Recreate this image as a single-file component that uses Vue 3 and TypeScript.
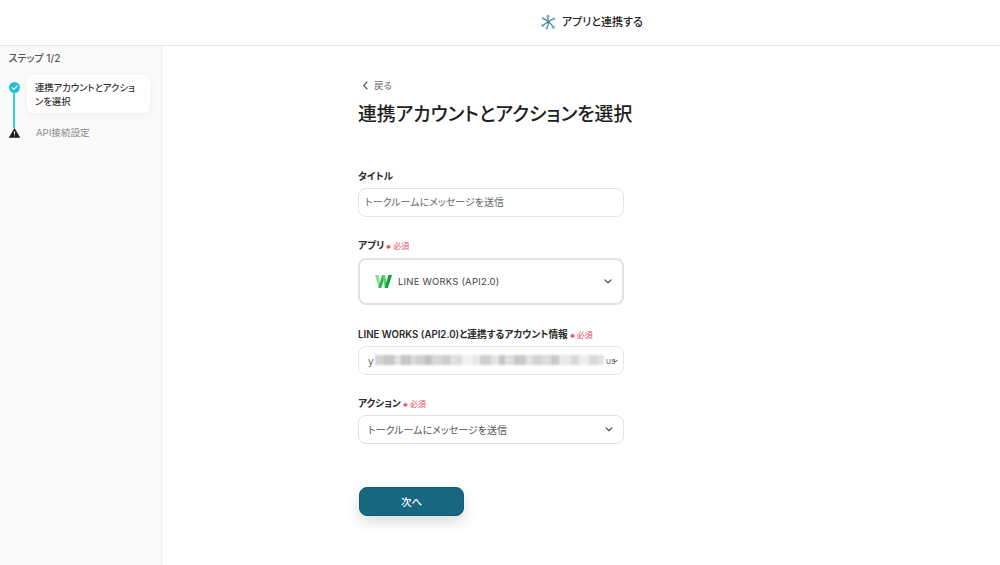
<script setup lang="ts">
const blur: [number, string][] = [
  [8,'#d4d4d4'],[12,'#c8c8c8'],[6,'#e2e2e2'],[10,'#c6c6c6'],[5,'#dcdcdc'],[9,'#cfcfcf'],[7,'#c2c2c2'],[10,'#d8d8d8'],[8,'#cccccc'],[12,'#dedede'],[10,'#f0f0f0'],[8,'#e8e8e8'],[11,'#cfcfcf'],[8,'#e4e4e4'],[6,'#c6c6c6'],[9,'#dedede'],[12,'#c9c9c9'],[7,'#e2e2e2'],[8,'#d0d0d0'],[10,'#dcdcdc'],[8,'#c9c9c9'],[12,'#e8e8e8'],[8,'#d8d8d8'],[10,'#ededed'],[8,'#d8d8d8'],[7,'#e2e2e2']
]
</script>

<template>
  <div class="page">
    <header class="top">
      <div class="top-title">
        <svg class="logo" width="15" height="16" viewBox="0 0 15 16" fill="none" stroke-linecap="round">
          <g stroke="#3f7f97" stroke-width="1.2">
            <path d="M7.5 8 Q6.4 5 7 2.6" />
            <path d="M7.5 8 Q10 5.6 12.6 5" />
            <path d="M7.5 8 Q10.6 10 12 13" />
            <path d="M7.5 8 Q7.4 11.4 6 14" />
            <path d="M7.5 8 Q4.4 9.4 2 11.4" />
            <path d="M7.5 8 Q5 5.6 2.4 4.6" />
          </g>
          <g fill="#6fb6cc">
            <circle cx="7" cy="2.2" r="1.5" />
            <circle cx="12.8" cy="4.8" r="1.4" />
            <circle cx="12.4" cy="13.2" r="1.5" />
            <circle cx="5.8" cy="14.3" r="1.3" />
            <circle cx="1.8" cy="11.6" r="1.5" />
            <circle cx="2.2" cy="4.4" r="1.3" />
          </g>
        </svg>
        <span>アプリと連携する</span>
      </div>
    </header>

    <div class="body">
      <aside class="side">
        <div class="step-head">ステップ 1/2</div>
        <div class="steps">
          <div class="rail">
            <svg class="check" width="11" height="11" viewBox="0 0 11 11">
              <circle cx="5.5" cy="5.5" r="5.5" fill="#22bfd6" />
              <path d="M3 5.7 L4.8 7.3 L8 4" fill="none" stroke="#fff" stroke-width="1.1" stroke-linecap="round" stroke-linejoin="round" />
            </svg>
            <div class="line"></div>
            <svg class="warn" width="11" height="10" viewBox="0 0 11 10">
              <path d="M5.5 0.4 L10.8 9.6 L0.2 9.6 Z" fill="#1c1c1c" stroke="#1c1c1c" stroke-width="0.6" stroke-linejoin="round" />
              <path d="M5.5 3.4 V6.4 M5.5 7.6 V8.3" stroke="#fff" stroke-width="1" />
            </svg>
          </div>
          <div class="step-items">
            <div class="step-card">連携アカウントとアクションを選択</div>
            <div class="step-next">API接続設定</div>
          </div>
        </div>
      </aside>

      <main class="main">
        <div class="form">
          <div class="back">
            <svg width="7" height="9" viewBox="0 0 7 9" fill="none">
              <path d="M5 1 L1.7 4.5 L5 8" stroke="#555" stroke-width="1.1" stroke-linecap="round" stroke-linejoin="round" />
            </svg>
            <span>戻る</span>
          </div>
          <h1 class="heading">連携アカウントとアクションを選択</h1>

          <div class="field first">
            <label class="label">タイトル</label>
            <div class="box text-box">トークルームにメッセージを送信</div>
          </div>

          <div class="field app">
            <label class="label wide">アプリ<span class="req"><i>✱</i>必須</span></label>
            <div class="box app-box">
              <svg class="w-logo" width="17" height="13" viewBox="0 0 17 13">
                <path d="M0 0 H3.6 L6.3 13 H3.6 Z" fill="#8fdc9b" />
                <path d="M3.6 13 L7 0 H10 L6.3 13 Z" fill="#1fb84c" />
                <path d="M7 0 H10 L12.8 13 H9.8 Z" fill="#63d06f" />
                <path d="M9.8 13 L13.4 0 H17 L12.8 13 Z" fill="#0d9f3f" />
              </svg>
              <span>LINE WORKS (API2.0)</span>
              <svg class="chev" width="8" height="5" viewBox="0 0 10 6" fill="none">
                <path d="M1.2 1 L5 4.6 L8.8 1" stroke="#444" stroke-width="1.4" stroke-linecap="round" stroke-linejoin="round" />
              </svg>
            </div>
          </div>

          <div class="field acct">
            <label class="label">LINE WORKS (API2.0)と連携するアカウント情報<span class="req"><i>✱</i>必須</span></label>
            <div class="box acct-box">
              <span class="y">y</span>
              <div class="blur">
                <span v-for="(b, i) in blur" :key="i" class="seg" :style="{ width: b[0] + 'px', background: b[1] }"></span>
              </div>
              <span class="us">us</span>
              <svg class="small-chev" width="5" height="4" viewBox="0 0 5 4"><path d="M0.5 0.8 L2.5 3 L4.5 0.8" fill="none" stroke="#444" stroke-width="1" /></svg>
            </div>
          </div>

          <div class="field act">
            <label class="label">アクション<span class="req"><i>✱</i>必須</span></label>
            <div class="box action-box">
              <span>トークルームにメッセージを送信</span>
              <svg class="chev" width="8" height="5" viewBox="0 0 10 6" fill="none">
                <path d="M1.2 1 L5 4.6 L8.8 1" stroke="#444" stroke-width="1.4" stroke-linecap="round" stroke-linejoin="round" />
              </svg>
            </div>
          </div>

          <button class="next" type="button">次へ</button>
        </div>
      </main>
    </div>
  </div>
</template>

<style>
html, body { margin: 0; background: #fff; }
</style>

<style scoped>
.page {
  width: 1000px;
  height: 565px;
  overflow: hidden;
  display: flex;
  flex-direction: column;
  font-family: "Inter", "Noto Sans CJK JP", sans-serif;
  font-feature-settings: "palt";
  color: #2a2a2a;
}
.top {
  height: 46px;
  box-sizing: border-box;
  border-bottom: 1px solid #e6e6e6;
  display: flex;
  padding-left: 541px;
  padding-top: 13px;
}
.top-title {
  display: flex;
  align-items: center;
  height: 16px;
  gap: 6px;
  font-size: 11px;
  font-weight: 500;
  color: #222;
}
.logo { margin-top: 2px; }
.top-title span { margin-top: -1px; }
.body { flex: 1; display: flex; min-height: 0; }
.side {
  width: 162px;
  box-sizing: border-box;
  background: #fafafa;
  border-right: 1px solid #efefef;
  padding: 6px 0 0 8.5px;
}
.step-head { font-size: 10px; line-height: 13px; font-weight: 500; color: #555; }
.steps { display: flex; margin-top: 10px; }
.rail {
  width: 11px;
  display: flex;
  flex-direction: column;
  align-items: center;
  padding-top: 7px;
}
.check, .warn { flex: none; display: block; }
.line { width: 2px; height: 35px; background: #3fcfdc; }
.step-items { margin-left: 7.5px; width: 123px; }
.step-card {
  box-sizing: border-box;
  width: 123px;
  height: 38px;
  background: #fff;
  border-radius: 6px;
  box-shadow: 0 2px 8px rgba(0, 0, 0, 0.05);
  padding: 6px 8px 0;
  font-size: 9.3px;
  line-height: 14px;
  font-weight: 500;
  color: #333;
}
.step-next {
  margin-top: 13px;
  padding-left: 9px;
  font-size: 9.6px;
  line-height: 14px;
  color: #8a8a8a;
}
.main { flex: 1; padding-left: 196px; }
.form { width: 266px; }
.back {
  margin-top: 32px;
  height: 14px;
  display: flex;
  align-items: center;
  gap: 5px;
  padding-left: 4px;
  font-size: 9.5px;
  color: #666;
}
.heading {
  margin: 9px 0 0;
  font-size: 18.85px;
  line-height: 28px;
  font-weight: 500;
  color: #1e1e1e;
  white-space: nowrap;
}
.field { display: flex; flex-direction: column; }
.first { margin-top: 40px; }
.app { margin-top: 21px; }
.acct { margin-top: 22px; }
.act { margin-top: 21px; }
.label {
  height: 14px;
  line-height: 16px;
  font-size: 9.7px;
  font-weight: 600;
  color: #2a2a2a;
  white-space: nowrap;
  margin-bottom: 5px;
}
.label.wide { margin-bottom: 6px; }
.req {
  margin-left: 2px;
  font-size: 8px;
  font-weight: 400;
  color: #ef4a5f;
}
.req i {
  font-style: normal;
  font-size: 6px;
  margin-right: 2px;
}
.box {
  box-sizing: border-box;
  border: 1.5px solid #e2e2e2;
  border-radius: 8px;
  background: #fff;
  display: flex;
  align-items: center;
  font-size: 10px;
  color: #555;
  position: relative;
}
.text-box { height: 29px; padding: 0 0 2px 6px; border-color: #e1e4ea; color: #666; }
.app-box {
  height: 47px;
  padding-left: 15px;
  gap: 6px;
  color: #444;
  font-size: 9.5px;
  letter-spacing: 0.2px;
  border: 2px solid #e2e2e2;
}
.w-logo { flex: none; }
.chev { position: absolute; right: 10px; top: 50%; margin-top: -2.5px; }
.acct-box { height: 29px; padding-left: 9px; border-color: #e6e6e6; overflow: hidden; }
.y { color: #666; font-size: 10px; }
.blur { display: flex; height: 10px; margin: -2px 0 0 1px; width: 230px; flex: none; overflow: hidden; filter: blur(0.8px); }
.seg { display: block; height: 100%; flex: none; }
.us { color: #777; font-size: 9px; margin-left: 1px; }
.small-chev { flex: none; margin-left: -3px; }
.action-box { height: 29px; padding-left: 9px; border-color: #e1e1e1; color: #555; }
.next {
  display: block;
  margin-top: 43px;
  margin-left: 1px;
  width: 105px;
  height: 29px;
  border: 1px solid #0e5e74;
  border-radius: 8px;
  background: #16677f;
  color: #fff;
  font-family: inherit;
  font-size: 10.5px;
  font-weight: 500;
  box-shadow: 0 6px 14px rgba(0, 0, 0, 0.14);
  padding: 0;
}
</style>
